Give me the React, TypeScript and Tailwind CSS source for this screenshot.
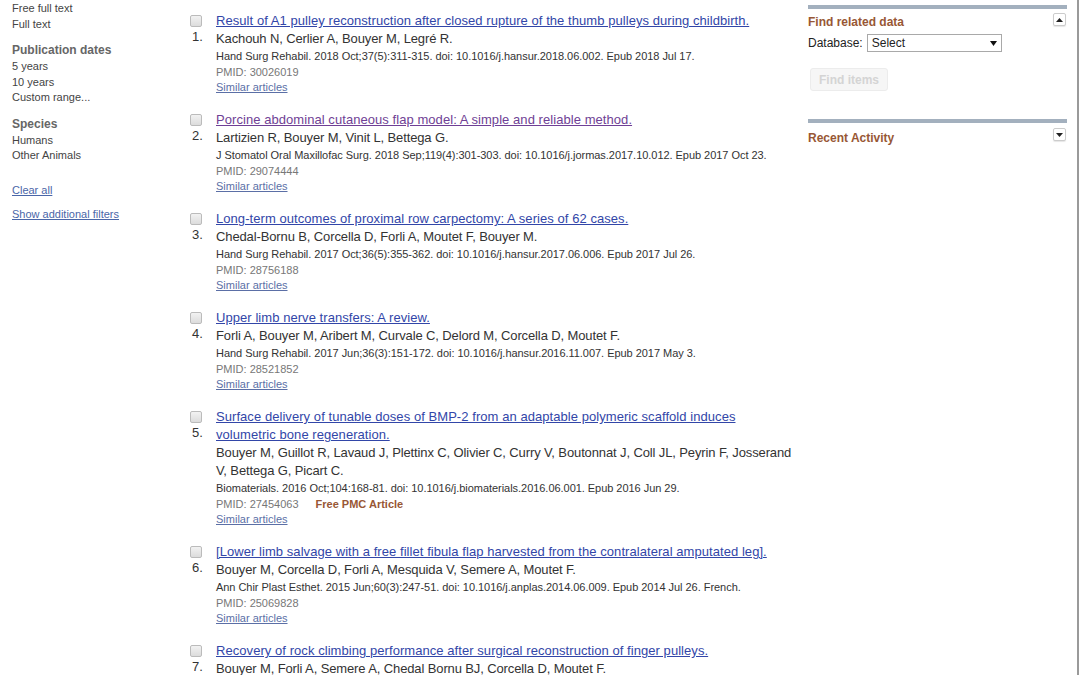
import React from 'react';

type Article = {
  title: string;
  visited?: boolean;
  authors: string;
  citation: string;
  pmid: string;
  pmc?: boolean;
};

const articles: Article[] = [
  {
    title: 'Result of A1 pulley reconstruction after closed rupture of the thumb pulleys during childbirth.',
    authors: 'Kachouh N, Cerlier A, Bouyer M, Legré R.',
    citation: 'Hand Surg Rehabil. 2018 Oct;37(5):311-315. doi: 10.1016/j.hansur.2018.06.002. Epub 2018 Jul 17.',
    pmid: '30026019',
  },
  {
    title: 'Porcine abdominal cutaneous flap model: A simple and reliable method.',
    visited: true,
    authors: 'Lartizien R, Bouyer M, Vinit L, Bettega G.',
    citation: 'J Stomatol Oral Maxillofac Surg. 2018 Sep;119(4):301-303. doi: 10.1016/j.jormas.2017.10.012. Epub 2017 Oct 23.',
    pmid: '29074444',
  },
  {
    title: 'Long-term outcomes of proximal row carpectomy: A series of 62 cases.',
    authors: 'Chedal-Bornu B, Corcella D, Forli A, Moutet F, Bouyer M.',
    citation: 'Hand Surg Rehabil. 2017 Oct;36(5):355-362. doi: 10.1016/j.hansur.2017.06.006. Epub 2017 Jul 26.',
    pmid: '28756188',
  },
  {
    title: 'Upper limb nerve transfers: A review.',
    authors: 'Forli A, Bouyer M, Aribert M, Curvale C, Delord M, Corcella D, Moutet F.',
    citation: 'Hand Surg Rehabil. 2017 Jun;36(3):151-172. doi: 10.1016/j.hansur.2016.11.007. Epub 2017 May 3.',
    pmid: '28521852',
  },
  {
    title: 'Surface delivery of tunable doses of BMP-2 from an adaptable polymeric scaffold induces volumetric bone regeneration.',
    authors: 'Bouyer M, Guillot R, Lavaud J, Plettinx C, Olivier C, Curry V, Boutonnat J, Coll JL, Peyrin F, Josserand V, Bettega G, Picart C.',
    citation: 'Biomaterials. 2016 Oct;104:168-81. doi: 10.1016/j.biomaterials.2016.06.001. Epub 2016 Jun 29.',
    pmid: '27454063',
    pmc: true,
  },
  {
    title: '[Lower limb salvage with a free fillet fibula flap harvested from the contralateral amputated leg].',
    authors: 'Bouyer M, Corcella D, Forli A, Mesquida V, Semere A, Moutet F.',
    citation: 'Ann Chir Plast Esthet. 2015 Jun;60(3):247-51. doi: 10.1016/j.anplas.2014.06.009. Epub 2014 Jul 26. French.',
    pmid: '25069828',
  },
  {
    title: 'Recovery of rock climbing performance after surgical reconstruction of finger pulleys.',
    authors: 'Bouyer M, Forli A, Semere A, Chedal Bornu BJ, Corcella D, Moutet F.',
    citation: 'J Hand Surg Eur Vol. 2016;41(4):406-11.',
    pmid: '26568539',
  },
];

function Sidebar() {
  return (
    <div className="w-[190px] shrink-0 pl-3 pt-[1px] text-[11px] leading-[15.5px] text-[#444]">
      <div>Free full text</div>
      <div>Full text</div>
      <div className="mt-[10px] text-[12px] font-bold leading-4 text-[#666]">Publication dates</div>
      <div className="mt-[1px]">5 years</div>
      <div>10 years</div>
      <div>Custom range...</div>
      <div className="mt-[10px] text-[12px] font-bold leading-4 text-[#666]">Species</div>
      <div className="mt-[1px]">Humans</div>
      <div>Other Animals</div>
      <div className="mt-[19px] text-[#4a66a8] underline">Clear all</div>
      <div className="mt-[9px] text-[#4a66a8] underline">Show additional filters</div>
    </div>
  );
}

function Toggle({ up }: { up: boolean }) {
  return (
    <div className="flex h-[13px] w-[13px] items-center justify-center rounded-[2px] border border-[#ccc] bg-white shadow-[0_1px_1px_rgba(0,0,0,0.1)]">
      <svg width="7" height="4" viewBox="0 0 7 4">
        {up ? <path d="M0 4 L3.5 0 L7 4 Z" fill="#222" /> : <path d="M0 0 L3.5 4 L7 0 Z" fill="#222" />}
      </svg>
    </div>
  );
}

function ArticleItem({ a, n }: { a: Article; n: number }) {
  return (
    <div className="mb-4 flex">
      <div className="w-[26px] shrink-0">
        <div className="mt-[3px] h-[12px] w-[12px] rounded-[2px] border border-[#bbb] bg-gradient-to-b from-[#f2f2f2] to-[#dcdcdc]" />
        <div className="mt-[1px] pl-[2px] text-[13px] leading-[18px] text-[#333]">{n}.</div>
      </div>
      <div className="w-[590px]">
        <div
          className={`w-[574px] text-[13px] leading-[18px] tracking-[0.06px] underline ${
            a.visited ? 'text-[#6f3f95]' : 'text-[#3246a8]'
          }`}
        >
          {a.title}
        </div>
        <div className="text-[13px] leading-[18px] tracking-[-0.12px] text-[#333]">{a.authors}</div>
        <div className="text-[11px] leading-4 tracking-[-0.04px] text-[#333]">{a.citation}</div>
        <div className="text-[11px] leading-4 text-[#777]">
          PMID: {a.pmid}
          {a.pmc && <span className="ml-[17px] font-bold text-[#985735]">Free PMC Article</span>}
        </div>
        <div className="text-[11px] leading-[15px] text-[#5b6fa6] underline">Similar articles</div>
      </div>
    </div>
  );
}

function RightPanel() {
  return (
    <div className="ml-2 w-[259px] shrink-0 pt-[5px]">
      <div className="h-[4px] bg-[#a3b0be]" />
      <div className="mt-[3px] flex items-start justify-between">
        <div className="pt-[2px] text-[12px] font-bold leading-4 text-[#985735]">Find related data</div>
        <div className="mr-[1px] mt-[1px]">
          <Toggle up />
        </div>
      </div>
      <div className="mt-[4px] flex items-center text-[12px] text-[#222]">
        <span>Database:</span>
        <div className="ml-[4px] flex h-[18px] w-[135px] items-center justify-between border border-[#a9a9a9] bg-white px-[4px] text-[12px]">
          <span>Select</span>
          <svg width="7" height="5" viewBox="0 0 7 5">
            <path d="M0 0 L3.5 5 L7 0 Z" fill="#111" />
          </svg>
        </div>
      </div>
      <div className="ml-[2px] mt-[16px] flex h-[23px] w-[78px] items-center justify-center rounded-[3px] border border-[#ececec] bg-[#f6f6f6] text-[12px] font-bold text-[#d4d4d4]">
        Find items
      </div>
      <div className="mt-[28px] h-[4px] bg-[#a3b0be]" />
      <div className="mt-[5px] flex items-start justify-between">
        <div className="pt-[2px] text-[12px] font-bold leading-4 text-[#985735]">Recent Activity</div>
        <div className="mr-[1px]">
          <Toggle up={false} />
        </div>
      </div>
    </div>
  );
}

export default function App() {
  return (
    <div className="flex h-[675px] w-[1080px] overflow-hidden bg-white font-['Liberation_Sans',Arial,sans-serif]">
      <Sidebar />
      <div className="w-[610px] shrink-0 pt-[12px]">
        {articles.map((a, i) => (
          <ArticleItem key={a.pmid} a={a} n={i + 1} />
        ))}
      </div>
      <RightPanel />
      <div className="flex-1" />
      <div className="mr-[1px] w-[2px] bg-[#9a9a9a]" />
    </div>
  );
}
